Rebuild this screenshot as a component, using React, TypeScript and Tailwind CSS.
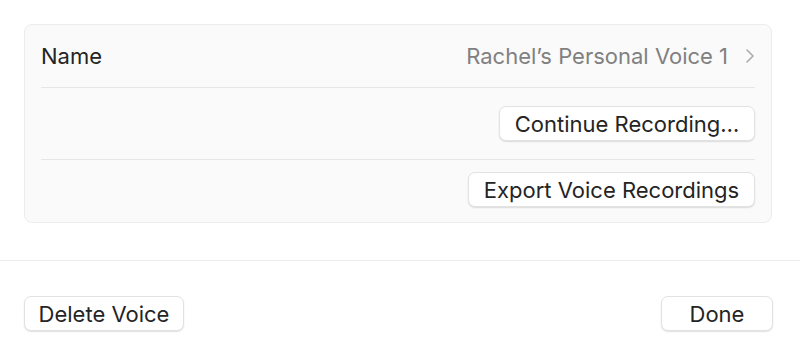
function MacButton({ label, className = "" }: { label: string; className?: string }) {
    return (
        <button
            className={`h-[35px] rounded-[7px] bg-white border border-[#e2e2e2] shadow-[0_1px_1.5px_rgba(0,0,0,0.12)] text-[22px] text-[#242424] leading-none ${className}`}
        >
            {label}
        </button>
    )
}

export default function App() {
    return (
        <div
            className="w-[800px] h-[349px] bg-white flex flex-col"
            style={{ fontFamily: "Inter, 'Noto Sans', sans-serif" }}
        >
            {/* Settings card */}
            <div className="pt-[24px] pl-[24px] pr-[28px]">
                <div className="rounded-[8px] bg-[#fafafa] border border-[#ececec] px-[16px]">
                    <div className="h-[62px] flex items-center justify-between">
                        <span className="text-[22px] text-[#242424]">Name</span>
                        <span className="flex items-center gap-[18px] text-[22px] text-[#808080]">
                            Rachel’s Personal Voice 1
                            <svg width="8" height="14" viewBox="0 0 8 14" className="mr-[1px]">
                                <path d="M1 1 L7 7 L1 13" fill="none" stroke="#ababab" strokeWidth="1.6" strokeLinecap="round" strokeLinejoin="round" />
                            </svg>
                        </span>
                    </div>
                    <div className="h-px bg-[#e6e6e6]" />
                    <div className="h-[71px] flex items-center justify-end">
                        <MacButton label="Continue Recording…" className="w-[256px]" />
                    </div>
                    <div className="h-px bg-[#e6e6e6]" />
                    <div className="pt-[12px] pb-[15px] flex justify-end">
                        <MacButton label="Export Voice Recordings" className="w-[287px]" />
                    </div>
                </div>
            </div>

            <div className="mt-[37px] h-px bg-[#ececec]" />

            {/* Footer */}
            <div className="pt-[35px] pl-[24px] pr-[27px] flex justify-between">
                <MacButton label="Delete Voice" className="w-[160px]" />
                <MacButton label="Done" className="w-[112px]" />
            </div>
        </div>
    )
}
